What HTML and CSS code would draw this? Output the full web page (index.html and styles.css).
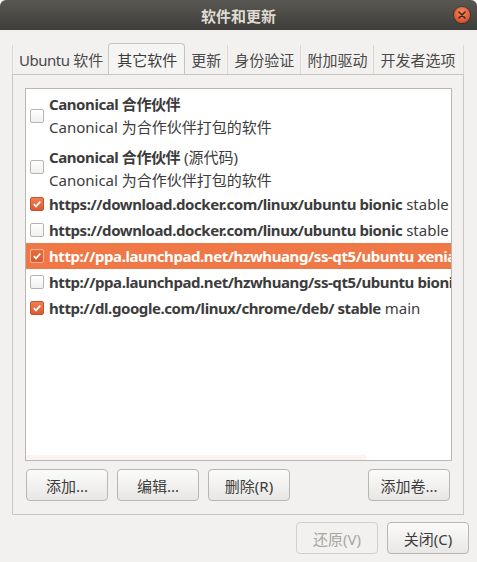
FILE: index.html
```html
<!DOCTYPE html>
<html lang="zh-CN">
<head>
<meta charset="utf-8">
<title>软件和更新</title>
<link rel="stylesheet" href="styles.css">
</head>
<body>
<div class="window">
  <header class="titlebar">
    <span class="title">软件和更新</span>
    <span class="close">
      <svg width="8" height="8" viewBox="0 0 8 8"><path d="M1 1 L7 7 M7 1 L1 7" stroke="#3a2a24" stroke-width="1.6" stroke-linecap="round"/></svg>
    </span>
  </header>
  <main class="content">
    <nav class="tabs">
      <span class="tab sep first-tab"><span class="latin">Ubuntu</span>&nbsp;软件</span>
      <span class="tab active">其它软件</span>
      <span class="tab">更新</span>
      <span class="tab sep">身份验证</span>
      <span class="tab sep">附加驱动</span>
      <span class="tab sep last">开发者选项</span>
    </nav>
    <section class="panel">
      <div class="list">
        <div class="row tall first">
          <span class="cb"></span>
          <div class="txt"><div><b>Canonical 合作伙伴</b></div><div>Canonical 为合作伙伴打包的软件</div></div>
        </div>
        <div class="row tall">
          <span class="cb"></span>
          <div class="txt"><div><b>Canonical 合作伙伴</b> (源代码)</div><div>Canonical 为合作伙伴打包的软件</div></div>
        </div>
        <div class="row">
          <span class="cb on"><svg width="10" height="10" viewBox="0 0 10 10"><path d="M1.8 5.2 L4 7.4 L8.3 2.6" fill="none" stroke="#fff" stroke-width="1.7"/></svg></span>
          <div class="txt"><b>https://download.docker.com/linux/ubuntu bionic</b> stable</div>
        </div>
        <div class="row">
          <span class="cb"></span>
          <div class="txt"><b>https://download.docker.com/linux/ubuntu bionic</b> stable</div>
        </div>
        <div class="row selected">
          <span class="cb on"><svg width="10" height="10" viewBox="0 0 10 10"><path d="M1.8 5.2 L4 7.4 L8.3 2.6" fill="none" stroke="#fff" stroke-width="1.7"/></svg></span>
          <div class="txt"><b>http://ppa.launchpad.net/hzwhuang/ss-qt5/ubuntu xenial</b> main</div>
        </div>
        <div class="row">
          <span class="cb"></span>
          <div class="txt"><b>http://ppa.launchpad.net/hzwhuang/ss-qt5/ubuntu bionic</b> main</div>
        </div>
        <div class="row">
          <span class="cb on"><svg width="10" height="10" viewBox="0 0 10 10"><path d="M1.8 5.2 L4 7.4 L8.3 2.6" fill="none" stroke="#fff" stroke-width="1.7"/></svg></span>
          <div class="txt"><b>http://dl.google.com/linux/chrome/deb/ stable</b> main</div>
        </div>
        <span class="hscroll"></span>
      </div>
      <div class="actions">
        <button class="btn">添加...</button>
        <button class="btn">编辑...</button>
        <button class="btn">删除(R)</button>
        <span class="spacer"></span>
        <button class="btn">添加卷...</button>
      </div>
    </section>
    <footer class="footer">
      <button class="btn disabled">还原(V)</button>
      <button class="btn">关闭(C)</button>
    </footer>
  </main>
</div>
</body>
</html>
```
FILE: styles.css
```css
* { box-sizing: border-box; }
html, body { margin: 0; padding: 0; background: #ffffff; }
body {
  font-family: "Noto Sans", "Noto Sans CJK SC", sans-serif;
  font-size: 15px;
  color: #3c3c3c;
}
.window {
  width: 477px;
  height: 562px;
  background: #f2f1f0;
  border-radius: 6px 6px 0 0;
  overflow: hidden;
  display: flex;
  flex-direction: column;
}
.titlebar {
  height: 30px;
  flex: none;
  background: linear-gradient(#595752, #3f3e3a);
  display: flex;
  align-items: center;
  justify-content: center;
  position: relative;
}
.title {
  color: #dfdbd2;
  font-weight: bold;
  font-size: 15px;
  font-family: "Noto Sans CJK SC", sans-serif;
}
.close {
  position: absolute;
  right: 7px;
  top: 7px;
  width: 16px;
  height: 16px;
  border-radius: 50%;
  background: radial-gradient(circle at 50% 35%, #f58a5e, #e0542a 70%, #c8441f);
  box-shadow: 0 0 0 1px rgba(0,0,0,0.25);
  display: flex;
  align-items: center;
  justify-content: center;
}
.content {
  flex: 1;
  padding: 12px 13px 0 12px;
  display: flex;
  flex-direction: column;
}
.tabs {
  display: flex;
  align-items: flex-end;
  height: 32px;
}
.tab {
  height: 29px;
  padding: 0 6px;
  display: flex;
  align-items: center;
  white-space: nowrap;
  color: #4a4a4a;
  font-size: 15px;
}
.tab.first-tab { padding: 0 5px 0 6px; }
.latin { letter-spacing: -0.5px; }
.tab.sep { border-left: 1px solid #dad8d4; }
.tab.last { border-right: 1px solid #dad8d4; flex: 1; }
.tab.active {
  height: 31px;
  border: 1px solid #c6c4c0;
  border-bottom: none;
  border-radius: 4px 4px 0 0;
  background: #f5f5f4;
  padding: 0 7px 0 8px;
  color: #3c3c3c;
}
.panel {
  border: 1px solid #c9c7c3;
  padding: 13px 11px 13px 12px;
  display: flex;
  flex-direction: column;
}
.list {
  height: 373px;
  background: #ffffff;
  border: 1px solid #b9b7b3;
  overflow: hidden;
  position: relative;
}
.row {
  display: flex;
  align-items: center;
  height: 26px;
  white-space: nowrap;
  color: #3c3c3c;
}
.row.tall { height: 49px; }
.row.tall.first { height: 53px; }
.row.tall .txt {
  align-self: flex-start;
  padding-top: 4px;
  line-height: 23px;
}
.txt b { font-weight: bold; letter-spacing: -0.42px; }
.cb {
  flex: none;
  width: 14px;
  height: 14px;
  margin: 0 5px 0 4px;
  border: 1px solid #b7b5b1;
  border-radius: 2px;
  background: linear-gradient(#ffffff, #f1f0ef);
  display: flex;
  align-items: center;
  justify-content: center;
}
.cb.on {
  border-color: #c5522c;
  background: linear-gradient(#ef7f55, #dc5b31);
}
.row.selected {
  background: #f07746;
  color: #ffffff;
}
.row.selected .cb.on {
  border-color: #f6b59b;
  background: linear-gradient(#e96c3e, #d95a2f);
}
.hscroll {
  position: absolute;
  left: 0;
  bottom: 0;
  width: 340px;
  height: 5px;
  background: #fcf3f0;
}
.actions {
  display: flex;
  margin-top: 8px;
  padding: 0 2px 0 1px;
  gap: 9px;
}
.spacer { flex: 1; }
.btn {
  width: 82px;
  height: 32px;
  font-family: "Noto Sans", "Noto Sans CJK SC", sans-serif;
  font-size: 15px;
  color: #3c3c3c;
  background: linear-gradient(#fbfbfa, #e8e7e5);
  border: 1px solid #b8b6b2;
  border-radius: 4px;
  padding: 0;
}
.btn.disabled {
  color: #a8a6a2;
  background: #f2f1f0;
  border-color: #d2d0cc;
}
.footer {
  display: flex;
  justify-content: flex-end;
  gap: 9px;
  margin-top: 7px;
  margin-right: -5px;
}
```
